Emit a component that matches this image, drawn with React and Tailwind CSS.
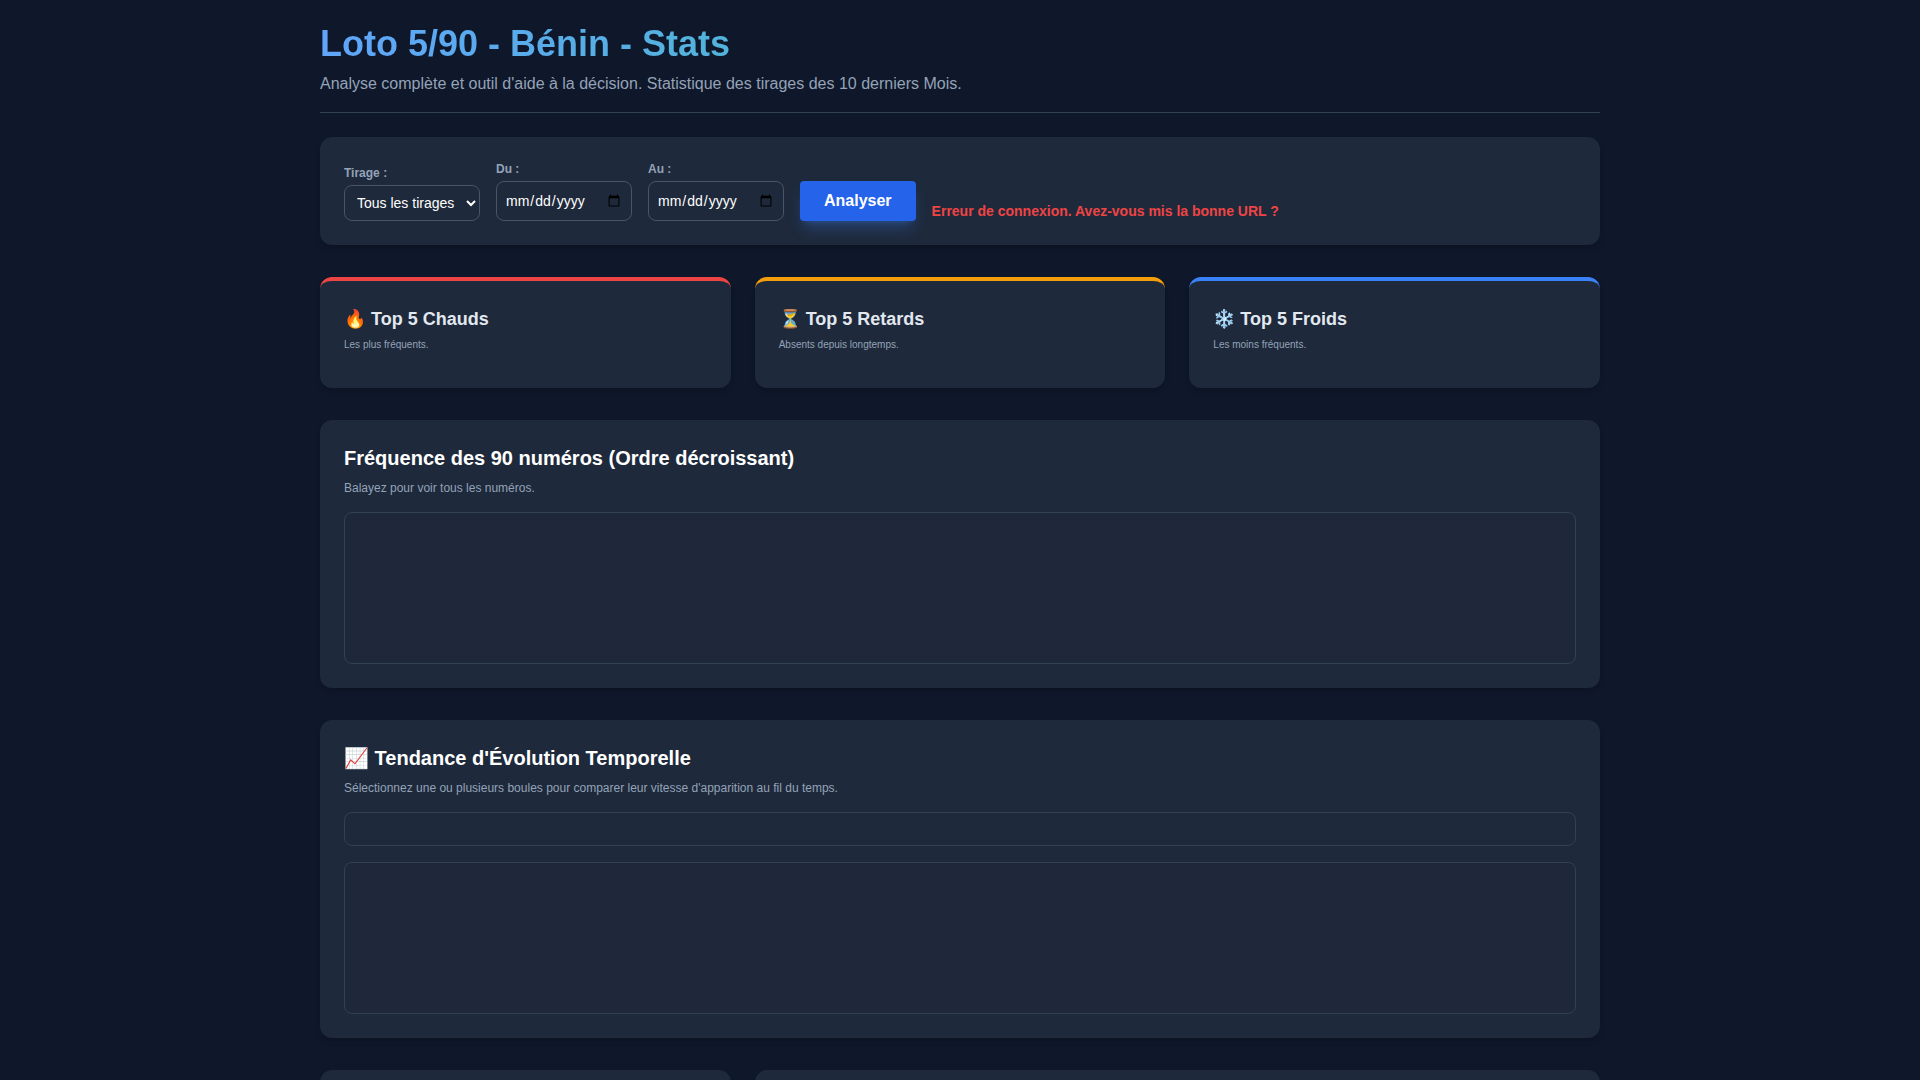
import React, { useState } from 'react';

const TOP_CARDS = [
  { id: 'hot', title: '🔥 Top 5 Chauds', hint: 'Les plus fréquents.', border: 'border-[#ef4444]' },
  { id: 'late', title: '⏳ Top 5 Retards', hint: 'Absents depuis longtemps.', border: 'border-[#f59e0b]' },
  { id: 'cold', title: '❄️ Top 5 Froids', hint: 'Les moins fréquents.', border: 'border-[#3b82f6]' },
];

const Field = ({ label, children }) => (
  <div className="w-[136px]">
    <label className="block text-xs font-bold text-[#94a3b8] mb-1">{label}</label>
    {children}
  </div>
);

const Panel = ({ title, hint, children }) => (
  <section className="bg-[#1e293b] rounded-xl shadow-md p-6 mb-8">
    <h2 className="text-xl font-bold text-white mb-2">{title}</h2>
    <p className="text-xs text-[#94a3b8] mb-4">{hint}</p>
    {children}
  </section>
);

// Zone de défilement des graphiques
const ChartBox = () => (
  <div className="h-[152px] rounded-lg border border-[#334155] bg-[#1f273a] overflow-x-auto" />
);

const App = () => {
  const [draw, setDraw] = useState('all');
  const [from, setFrom] = useState('');
  const [to, setTo] = useState('');
  const [status, setStatus] = useState('Erreur de connexion. Avez-vous mis la bonne URL ?');

  const inputClass =
    'block w-full bg-[#1e293b] border border-[#475569] rounded-lg p-2 text-sm text-white outline-none focus:border-[#3b82f6]';

  return (
    <div className="h-screen overflow-hidden bg-[#0f172a] pt-6 font-['Liberation_Sans',Arial,sans-serif] text-[#e2e8f0]">
      <div className="w-[1280px] mx-auto">
        <header className="border-b border-[#334155] pb-4 mb-6">
          <h1 className="text-4xl font-bold mb-2 bg-linear-to-r/srgb from-[#60a5fa] to-[#34d399] bg-clip-text text-transparent">
            Loto 5/90 - Bénin - Stats
          </h1>
          <p className="text-base text-[#94a3b8]">
            Analyse complète et outil d'aide à la décision. Statistique des tirages des 10 derniers Mois.
          </p>
        </header>

        {/* Filtres */}
        <div className="flex items-end gap-4 bg-[#1e293b] rounded-xl shadow-md p-6 mb-8">
          <Field label="Tirage :">
            <select className={inputClass} value={draw} onChange={(e) => setDraw(e.target.value)}>
              <option value="all">Tous les tirages</option>
            </select>
          </Field>
          <Field label="Du :">
            <input type="date" className={`${inputClass} h-10`} value={from} onChange={(e) => setFrom(e.target.value)} />
          </Field>
          <Field label="Au :">
            <input type="date" className={`${inputClass} h-10`} value={to} onChange={(e) => setTo(e.target.value)} />
          </Field>
          <button
            onClick={() => setStatus('Erreur de connexion. Avez-vous mis la bonne URL ?')}
            className="bg-[#2563eb] hover:bg-[#3b82f6] text-white font-bold py-2 px-6 rounded shadow-lg shadow-[#3b82f6]/30"
          >
            Analyser
          </button>
          <span className="text-sm font-bold text-[#ef4444]">{status}</span>
        </div>

        {/* Top 5 */}
        <div className="grid grid-cols-3 gap-6 mb-8">
          {TOP_CARDS.map((card) => (
            <div key={card.id} className={`bg-[#1e293b] rounded-xl shadow-md p-6 border-t-4 ${card.border}`}>
              <h3 className="text-lg font-bold text-[#e2e8f0] mb-1">{card.title}</h3>
              <p className="text-[10px] leading-[15px] text-[#94a3b8] mb-3">{card.hint}</p>
            </div>
          ))}
        </div>

        <Panel title="Fréquence des 90 numéros (Ordre décroissant)" hint="Balayez pour voir tous les numéros.">
          <ChartBox />
        </Panel>

        <Panel
          title="📈 Tendance d'Évolution Temporelle"
          hint="Sélectionnez une ou plusieurs boules pour comparer leur vitesse d'apparition au fil du temps."
        >
          <div className="flex flex-wrap gap-2 p-4 mb-4 rounded-lg border border-[#334155]" />
          <ChartBox />
        </Panel>

        <div className="grid grid-cols-3 gap-6">
          <div className="h-80 bg-[#1e293b] rounded-xl shadow-md" />
          <div className="h-80 col-span-2 bg-[#1e293b] rounded-xl shadow-md" />
        </div>
      </div>
    </div>
  );
};

export default App;
